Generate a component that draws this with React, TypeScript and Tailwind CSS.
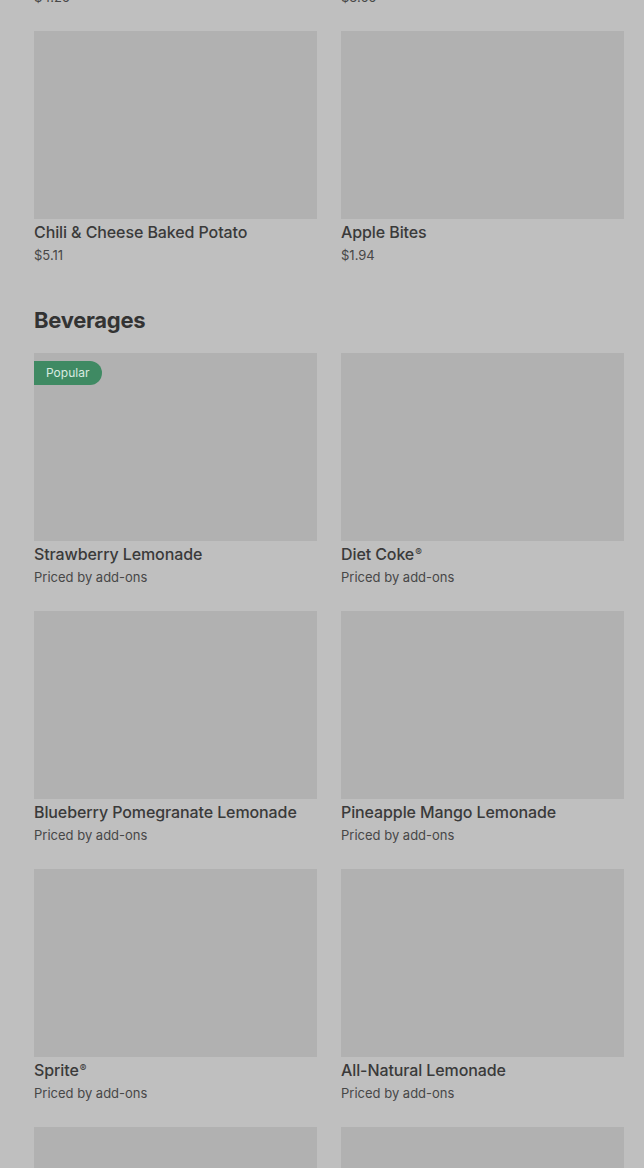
import React from "react";

type Item = { name: string; price: string; popular?: boolean; reg?: boolean };

const Card = ({ item }: { item: Item }) => (
  <div className="flex flex-col">
    <div className="relative h-[188px] w-full bg-[#b1b1b1]">
      {item.popular && (
        <span className="absolute left-0 top-[8px] flex h-[24px] items-center rounded-r-full bg-[#3f8a63] pl-[12px] pr-[13px] text-[12px] leading-none text-[#d9ebe0]">
          Popular
        </span>
      )}
    </div>
    <div className="mt-[3px] text-[16px] font-medium leading-[20px] tracking-[-0.1px] text-[#3a3a3a]">
      {item.name}
      {item.reg && <span className="ml-[1px] text-[10px] leading-none align-[4px]">®</span>}
    </div>
    <div className="mt-[4px] text-[13px] leading-[18px] text-[#474747]">{item.price}</div>
  </div>
);

const Grid = ({ items }: { items: Item[] }) => (
  <div className="grid grid-cols-2 gap-x-[24px] gap-y-[25px]">
    {items.map((it, i) => (
      <Card key={i} item={it} />
    ))}
  </div>
);

export default function App() {
  const top: Item[] = [
    { name: "Loaded Baked Potato", price: "$4.25" },
    { name: "Side Salad", price: "$3.55" },
    { name: "Chili & Cheese Baked Potato", price: "$5.11" },
    { name: "Apple Bites", price: "$1.94" },
  ];
  const bev: Item[] = [
    { name: "Strawberry Lemonade", price: "Priced by add-ons", popular: true },
    { name: "Diet Coke", price: "Priced by add-ons", reg: true },
    { name: "Blueberry Pomegranate Lemonade", price: "Priced by add-ons" },
    { name: "Pineapple Mango Lemonade", price: "Priced by add-ons" },
    { name: "Sprite", price: "Priced by add-ons", reg: true },
    { name: "All-Natural Lemonade", price: "Priced by add-ons" },
    { name: "Coca-Cola", price: "Priced by add-ons", reg: true },
    { name: "Dr Pepper", price: "Priced by add-ons", reg: true },
  ];
  return (
    <div
      className="h-[1168px] w-[644px] overflow-hidden bg-[#bfbfbf] pl-[34px] pr-[20px]"
      style={{ fontFamily: "Inter, 'Noto Sans', sans-serif" }}
    >
      <div className="-mt-[227px]">
        <Grid items={top} />
      </div>
      <h2 className="mt-[40px] text-[22px] font-bold leading-[32px] tracking-[-0.3px] text-[#333333]">
        Beverages
      </h2>
      <div className="mt-[17px]">
        <Grid items={bev} />
      </div>
    </div>
  );
}
